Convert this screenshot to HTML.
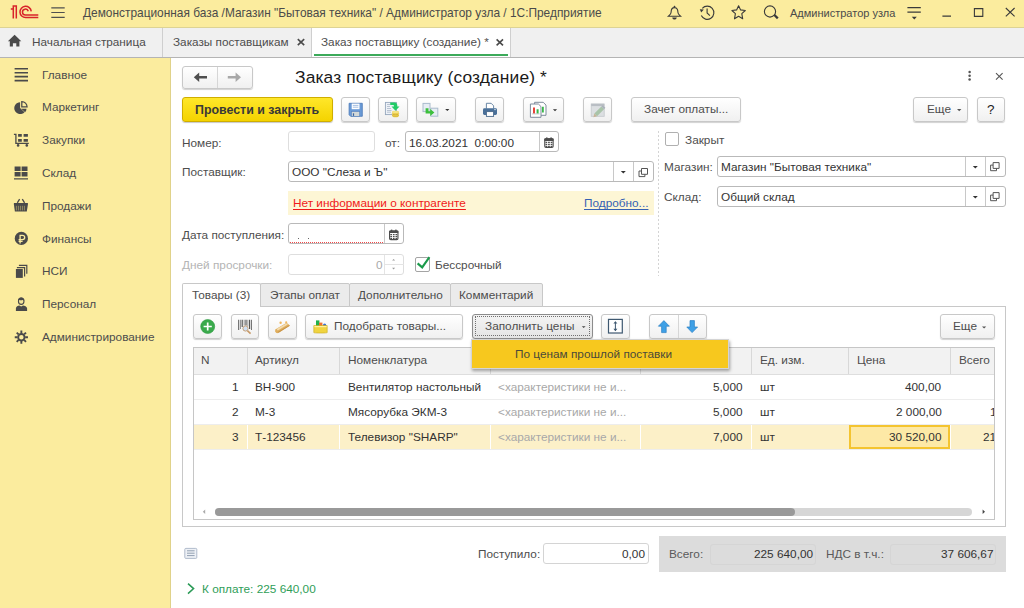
<!DOCTYPE html>
<html><head><meta charset="utf-8">
<style>
*{box-sizing:border-box;margin:0;padding:0}
html,body{width:1024px;height:608px;overflow:hidden;background:#fff}
body{font-family:"Liberation Sans",sans-serif;font-size:11.8px;color:#4d4d4d;position:relative}
.a{position:absolute}
svg.a{overflow:visible}
.t{position:absolute;white-space:nowrap;line-height:14px}
#top{left:0;top:0;width:1024px;height:28px;background:#fbec9e;border-bottom:1px solid #ddd394}
#tabs{left:0;top:28px;width:1024px;height:30px;background:#f0f0f0;border-bottom:1px solid #b4b4b4}
#side{left:0;top:58px;width:171px;height:550px;background:#fbec9e;border-right:1px solid #e0d28a}
.btn{position:absolute;height:25px;border:1px solid #c8c8c8;border-radius:3px;background:linear-gradient(#fff,#f0f0f0);box-shadow:0 1px 1px rgba(0,0,0,.18)}
.inp{position:absolute;height:21px;border:1px solid #b9b9b9;border-radius:3px;background:#fff}
.dd{position:absolute;top:0;width:0;height:100%;border-left:1px solid #c8c8c8}
</style></head><body>
<!-- top bar -->
<div id="top" class="a">
  <svg class="a" style="left:0;top:0" width="45" height="27" viewBox="0 0 45 27">
    <g fill="none" stroke="#d8232a" stroke-width="1.5">
      <path d="M10.8 9.1 H13.3 V18.4 M13.3 9.1 V6 H16.3 V18.4"/>
      <path d="M31.25 11.3 A5.65 5.65 0 1 0 25.65 17.6 H38.3"/>
      <path d="M28.25 11.3 A2.93 2.93 0 1 0 25.5 14.95 H38.3"/>
    </g>
  </svg>
  <svg class="a" style="left:0;top:0" width="70" height="27" viewBox="0 0 70 27">
    <g stroke="#4f4f4f" stroke-width="1.2"><path d="M51.3 7.9H64.7M51.3 12.5H64.7M51.3 17.3H64.7"/></g>
  </svg>
  <div class="t" style="left:83px;top:6px;font-size:11.9px;color:#4a4a4a">Демонстрационная база /Магазин "Бытовая техника" / Администратор узла / 1С:Предприятие</div>
  <svg class="a" style="left:0;top:0" width="1024" height="27" viewBox="0 0 1024 27">
    <g fill="none" stroke="#3a3a3a" stroke-width="1.1">
      <path d="M674.5 7.6 C671.6 7.6 671.1 10.2 671.1 12.3 C671.1 14.2 669.6 15.1 668.4 16.2 H680.6 C679.4 15.1 677.9 14.2 677.9 12.3 C677.9 10.2 677.4 7.6 674.5 7.6Z"/>
      <path d="M701.3 15.6 A6.6 6.6 0 1 0 702.3 8.4"/>
      <path d="M707.1 8.6 V13 L709.9 15.6"/>
      <path d="M738.6 5.7 L740.6 9.9 L745.3 10.5 L741.8 13.6 L742.7 18.8 L738.6 16.3 L734.5 18.8 L735.4 13.6 L731.9 10.5 L736.6 9.9Z" stroke-linejoin="round"/>
      <circle cx="770" cy="11.5" r="5.6"/>
      <path d="M907.4 7.6H920.8M907.4 12.1H920.8"/>
      <path d="M942.4 16.1H951M974.4 8.6H982.8V16.4H974.4Z"/>
      <path d="M1005.8 8L1014.6 16.4M1014.6 8L1005.8 16.4"/>
    </g>
    <g fill="#3a3a3a">
      <path d="M673.3 6.9 L674.5 5.4 L675.7 6.9Z"/>
      <path d="M672.2 17.6 H676.8 C676.5 19 675.6 19.6 674.5 19.6 C673.4 19.6 672.5 19 672.2 17.6Z"/>
      <path d="M699.8 9.2 L703.8 9.6 L701.2 12.4Z"/>
      <path d="M773.6 15.8 L775.2 14.2 L778.6 17.6 L777 19.2Z"/>
      <path d="M911.8 16.8H916.8L914.3 19.4Z"/>
    </g>
  </svg>
  <div class="t" style="left:790px;top:6px;font-size:11px;color:#4a4a4a">Администратор узла</div>
</div>
<!-- tabs -->
<div id="tabs" class="a">
  <svg class="a" style="left:0;top:0" width="30" height="30" viewBox="0 28 30 30">
    <path fill="#4a4a4a" d="M14.6 34.8 L21.3 41.2 H19.4 V46.6 H16.3 V43.2 H12.9 V46.6 H9.8 V41.2 H7.9Z"/>
  </svg>
  <div class="t" style="left:32px;top:7px;font-size:11.75px">Начальная страница</div>
  <div class="a" style="left:162px;top:0;width:1px;height:29px;background:#cfcfcf"></div>
  <div class="t" style="left:173px;top:7px;font-size:11.75px">Заказы поставщикам</div>
  <svg class="a" style="left:0;top:0" width="520" height="30" viewBox="0 28 520 30">
    <g stroke="#4a4a4a" stroke-width="1.6"><path d="M297.8 39.2L304.2 45.2M304.2 39.2L297.8 45.2"/></g>
  </svg>
  <div class="a" style="left:311px;top:0;width:200px;height:29px;background:#fff;border-left:1px solid #cfcfcf;border-right:1px solid #cfcfcf"></div>
  <div class="t" style="left:321px;top:7px;font-size:11.75px">Заказ поставщику (создание) *</div>
  <svg class="a" style="left:0;top:0" width="520" height="30" viewBox="0 28 520 30">
    <g stroke="#4a4a4a" stroke-width="1.6"><path d="M496.6 39.4L503 45.4M503 39.4L496.6 45.4"/></g>
  </svg>
  <div class="a" style="left:314px;top:26px;width:194px;height:2px;background:#3caa5a"></div>
</div>
<!-- sidebar -->
<div id="side" class="a">
  <div class="t" style="left:42px;top:10px">Главное</div>
  <div class="t" style="left:42px;top:42px">Маркетинг</div>
  <div class="t" style="left:42px;top:75px">Закупки</div>
  <div class="t" style="left:42px;top:108px">Склад</div>
  <div class="t" style="left:42px;top:141px">Продажи</div>
  <div class="t" style="left:42px;top:174px">Финансы</div>
  <div class="t" style="left:42px;top:206px">НСИ</div>
  <div class="t" style="left:42px;top:239px">Персонал</div>
  <div class="t" style="left:42px;top:272px">Администрирование</div>
</div>
<svg class="a" style="left:0;top:0" width="40" height="360" viewBox="0 0 40 360">
  <g fill="#4a4a4a">
    <path d="M14.6 67.9H28V69.5H14.6ZM14.6 71.9H28V73.5H14.6ZM14.6 75.8H28V77.4H14.6ZM14.6 79.8H28V81.4H14.6Z"/>
    <path d="M20.1 102.3 A5.9 5.9 0 1 0 24.5 112.2 L20.1 108.1Z"/>
    <path d="M21.2 108.7 H26.5 A5.6 5.6 0 0 1 25.1 112.2Z"/>
    <!-- cart -->
    <path d="M18.1 133.9H21.8V136.8H18.1ZM23.6 133.9H27.9V136.8H23.6ZM18.1 138.9H21.8V141.8H18.1ZM23.6 138.9H27.9V141.8H23.6Z"/>
    <circle cx="18.1" cy="145.4" r="1.3"/><circle cx="26.8" cy="145.4" r="1.3"/>
    <!-- sklad -->
    <path d="M14.6 166.6H20.6V171.1H14.6ZM21.6 166.6H27.5V171.1H21.6ZM14.6 172.1H20.6V176.5H14.6ZM21.6 172.1H27.5V176.5H21.6ZM14 178.3H28V179.6H14Z"/>
    <!-- basket -->
    <path d="M13.9 202.9H27.9V204.6L26.8 211.4H14.9L13.9 204.6Z"/>
    <!-- ruble -->
    <circle cx="21.35" cy="238.4" r="6.6"/>
    <!-- nsi -->
    <path d="M15.9 269H22.8V277.9H15.9Z"/>
    <!-- person -->
    <path d="M15.9 310.9 V308.2 C15.9 306.5 18 305.6 19.4 305.4 L21.2 306.6 L23 305.4 C24.4 305.6 27.1 306.5 27.1 308.2 V310.9Z"/>
  </g>
  <g fill="none" stroke="#4a4a4a">
    <path stroke-width="1.25" d="M21.8 106.9 V101.6 A5.4 5.4 0 0 1 27.1 106.9Z"/>
    <path stroke-width="1.3" d="M13.9 134.3H15.9V143.3H28.8"/>
    <path stroke-width="1.3" d="M17.3 202.8L19.6 199.2M24.6 202.8L22.3 199.2"/>
    <path stroke-width="1.2" d="M16.9 267.6H24.6V276.4M18.9 265.3H26.8V273.8"/>
    <circle stroke-width="1.9" cx="21.35" cy="337.2" r="3.2"/>
    <path stroke-width="1.9" d="M21.35 330.6V333.4M21.35 341V343.8M14.75 337.2H17.5M25.2 337.2H27.95M16.7 332.55L18.6 334.45M24.1 339.95L26 341.85M26 332.55L24.1 334.45M18.6 339.95L16.7 341.85"/>
  </g>
  <g fill="none" stroke="#fbec9e">
    <path stroke-width="0.8" stroke="#a89e6a" d="M16.4 205.8V210.4M18.4 205.8V210.4M20.4 205.8V210.4M22.4 205.8V210.4M24.4 205.8V210.4"/>
    <path stroke-width="1.3" d="M20.1 243.6V235.4H22.4C23.9 235.4 24.7 236.3 24.7 237.5C24.7 238.7 23.9 239.6 22.4 239.6H18.6M18.6 241.3H22.6"/>
  </g>
  <ellipse cx="21.2" cy="301.2" rx="2.75" ry="3.2" fill="#f3e49a" stroke="#4a4a4a" stroke-width="1.1"/>
  <path fill="#4a4a4a" d="M18.2 301.2 C17.9 298.8 19.4 297.6 21.2 297.6 C23 297.6 24.5 298.8 24.2 301.2 C23.6 300.2 23 299.9 22.6 300 C21.8 300.4 20.4 300.4 19.6 299.9 C19 300.1 18.6 300.6 18.2 301.2Z"/>
</svg>
<!-- form header -->
<div class="btn" style="left:182px;top:66px;width:71px;height:23px"></div>
<div class="a" style="left:217px;top:67px;width:1px;height:21px;background:#d6d6d6"></div>
<svg class="a" style="left:0;top:0" width="260" height="95" viewBox="0 0 260 95">
  <path fill="#4f4f4f" d="M193.8 77.2 L199.2 72.4 V75.9 H207 V78.5 H199.2 V82 Z"/>
  <path fill="#a8a8a8" d="M241 77.2 L235.6 72.4 V75.9 H227.8 V78.5 H235.6 V82 Z"/>
</svg>
<div class="t" style="left:295px;top:67px;font-size:17.4px;letter-spacing:0.13px;line-height:20px;color:#1a1a1a">Заказ поставщику (создание) *</div>
<svg class="a" style="left:0;top:0" width="1024" height="95" viewBox="0 0 1024 95">
  <g fill="#555"><circle cx="969.6" cy="72" r="1.25"/><circle cx="969.6" cy="75.8" r="1.25"/><circle cx="969.6" cy="79.6" r="1.25"/></g>
  <path stroke="#555" stroke-width="1.1" d="M996 73.2L1002.6 79.6M1002.6 73.2L996 79.6"/>
</svg>

<div class="a" style="left:182px;top:97px;width:151px;height:25px;border:1px solid #cfae00;border-radius:3px;background:linear-gradient(#ffe72a,#f4d300);box-shadow:0 1px 1px rgba(0,0,0,.22)"></div>
<div class="t" style="left:195px;top:102.5px;font-weight:bold;font-size:12.4px;color:#383838">Провести и закрыть</div>
<div class="btn" style="left:341px;top:97px;width:29px"></div>
<div class="btn" style="left:378px;top:97px;width:30px"></div>
<div class="btn" style="left:416px;top:97px;width:40px"></div>
<div class="btn" style="left:475px;top:97px;width:29px"></div>
<div class="btn" style="left:523px;top:97px;width:41px"></div>
<div class="btn" style="left:583px;top:97px;width:29px"></div>
<div class="btn" style="left:631px;top:97px;width:110px"></div>
<div class="t" style="left:644px;top:102px">Зачет оплаты...</div>
<div class="btn" style="left:913px;top:97px;width:55px"></div>
<div class="t" style="left:927px;top:102px">Еще</div>
<div class="btn" style="left:977px;top:97px;width:28px"></div>
<div class="t" style="left:987px;top:102.5px;color:#222;font-size:13.5px">?</div>
<svg class="a" style="left:0;top:0" width="1024" height="130" viewBox="0 0 1024 130">
  <!-- save -->
  <path fill="#6a9ad6" stroke="#4a78b8" stroke-width="0.8" d="M349.1 103.3H362.3V116.3H350.6L349.1 114.8Z"/>
  <rect x="351.7" y="103.6" width="7.8" height="5.6" fill="#fff"/>
  <path stroke="#8fb0dc" stroke-width="0.8" d="M352.8 105.4H358.4M352.8 107.2H358.4"/>
  <rect x="351.5" y="111.6" width="8.2" height="4.7" fill="#d2d8d8" stroke="#5a84be" stroke-width="0.6"/>
  <rect x="352.9" y="113.3" width="1.2" height="2.6" fill="#3a64a0"/>
  <!-- post -->
  <rect x="385.4" y="102.4" width="11" height="12.2" fill="#eef2f8" stroke="#95a6bd" stroke-width="0.9"/>
  <path stroke="#a9b6c8" stroke-width="0.8" d="M387 104.5H390M387 106.5H390M387 108.5H391M387 110.5H391.5M387 112.2H391"/>
  <path fill="#ecd050" d="M392.2 112A3.3 1.3 0 0 1 398.8 112V116A3.3 1.3 0 0 1 392.2 116Z"/>
  <path fill="none" stroke="#caa428" stroke-width="0.6" d="M392.2 113.6A3.3 1.1 0 0 0 398.8 113.6M392.2 115.2A3.3 1.1 0 0 0 398.8 115.2"/>
  <ellipse cx="395.5" cy="112" rx="3.3" ry="1.1" fill="#f6e486"/>
  <path fill="#22cc66" d="M390.2 102.4 H394.5 C396.5 102.4 397.3 103.8 397.3 105.4 V106.6 H399.5 L395.5 110.8 L391.5 106.6 H393.9 V105.6 C393.9 105.1 393.6 104.9 393.1 104.9 H390.2Z"/>
  <!-- create based -->
  <rect x="423" y="103.4" width="7" height="8.2" fill="#e6edf4" stroke="#a9bbcc" stroke-width="1"/>
  <rect x="430.8" y="108.2" width="7" height="8" fill="#e6edf4" stroke="#a9bbcc" stroke-width="1"/>
  <path fill="#3cc03c" d="M425.6 108.3H428.5V111.2H430.2V108.9L434.4 112.4L430.2 115.9V113.6H425.6Z"/>
  <path fill="#333" d="M445.2 108.9H449.4L447.3 111Z"/>
  <!-- print -->
  <path fill="#fff" stroke="#5a7a9c" stroke-width="0.9" d="M486.4 108.6V103.3H491.2L493.6 105.8V108.6"/>
  <rect x="483" y="108.3" width="14" height="6.6" rx="1.4" fill="#4a7099"/>
  <rect x="494.2" y="109.2" width="1.6" height="0.9" fill="#dde8f2"/>
  <rect x="486.4" y="111.6" width="7.2" height="4.8" fill="#fff" stroke="#4a6a8c" stroke-width="0.9"/>
  <!-- reports -->
  <path fill="#fff" stroke="#7f8b9c" stroke-width="1" d="M534.6 102.3H543.2L546 105.1V115.3H534.6Z"/>
  <path fill="#fff" stroke="#7f8b9c" stroke-width="1" d="M530.4 104H538.4L541 106.6V117.3H530.4Z"/>
  <path fill="#e8433a" d="M533 107.6H535V113.6H533Z"/>
  <path fill="#38b848" d="M536.6 109.2H538.6V113.6H536.6ZM542 106.8H543.8V112.4H542Z"/>
  <path stroke="#9aa" stroke-width="0.6" d="M532 113.9H539.6"/>
  <path fill="#333" d="M552.9 109.2H557.1L555 111.2Z"/>
  <!-- edit disabled -->
  <rect x="591.2" y="103.9" width="13" height="12.4" fill="#dcdfe2" stroke="#c4c8cc" stroke-width="0.8"/>
  <rect x="591.2" y="103.9" width="13" height="2.2" fill="#b9bec4"/>
  <path fill="#a9c4a9" d="M594.4 113.6L601.4 106.6L604 109.2L597 116.2Z"/>
  <path fill="#c7b496" d="M594.4 113.6L597 116.2L593.4 117.2Z"/>
  <path fill="#aab2ba" d="M601.4 106.6L602.8 105.2L605.4 107.8L604 109.2Z"/>
  <!-- eshe -->
  <path fill="#555" d="M957 109.1H961.4L959.2 111.2Z"/>
</svg>
<!-- fields -->
<div class="t" style="left:182px;top:136px">Номер:</div>
<div class="inp" style="left:288px;top:131px;width:87px;border-color:#dedede"></div>
<div class="t" style="left:385px;top:136px">от:</div>
<div class="inp" style="left:405px;top:131px;width:154px"><div class="dd" style="left:133px"></div></div>
<div class="t" style="left:409px;top:136px;color:#333">16.03.2021&nbsp; 0:00:00</div>

<div class="t" style="left:182px;top:165px">Поставщик:</div>
<div class="inp" style="left:288px;top:161px;width:366px"><div class="dd" style="left:324px"></div><div class="dd" style="left:344px"></div></div>
<div class="t" style="left:292px;top:165px;color:#333">ООО "Слеза и Ъ"</div>

<div class="a" style="left:288px;top:191px;width:366px;height:24px;background:#fdf6d5"></div>
<div class="t" style="left:293px;top:196px;color:#f01a1a;text-decoration:underline;text-decoration-skip-ink:none;text-underline-offset:1.5px">Нет информации о контрагенте</div>
<div class="t" style="left:584px;top:196px;color:#3561b3;text-decoration:underline;text-decoration-skip-ink:none;text-underline-offset:1.5px">Подробно...</div>

<div class="t" style="left:182px;top:228px">Дата поступления:</div>
<div class="inp" style="left:288px;top:223px;width:116px;height:21px"><div class="dd" style="left:95px"></div></div>
<div class="a" style="left:290px;top:242px;width:93px;height:0;border-top:1px dotted #f04848"></div>
<div class="a" style="left:298px;top:238px;width:1px;height:1px;background:#666"></div>
<div class="a" style="left:308px;top:238px;width:1px;height:1px;background:#666"></div>
<div class="t" style="left:182px;top:258px;color:#b4b4b4">Дней просрочки:</div>
<div class="inp" style="left:288px;top:254px;width:116px;border-color:#dedede"><div class="dd" style="left:95px;border-color:#e4e4e4"></div><div class="a" style="left:96px;top:9px;width:19px;height:1px;background:#e4e4e4"></div></div>
<div class="t" style="left:376px;top:258px;color:#aaa">0</div>
<div class="a" style="left:415px;top:257px;width:15px;height:15px;border:1px solid #a4a4a4;border-radius:2px;background:#fff"></div>
<div class="t" style="left:435px;top:258px">Бессрочный</div>



<div class="a" style="left:658px;top:131px;width:1px;height:145px;background:repeating-linear-gradient(#d4d4d4 0 2px,transparent 2px 4px)"></div>
<div class="a" style="left:665px;top:132px;width:14px;height:14px;border:1px solid #b0b0b0;border-radius:2px;background:#fff"></div>
<div class="t" style="left:685px;top:133px">Закрыт</div>
<div class="t" style="left:664px;top:160px">Магазин:</div>
<div class="inp" style="left:717px;top:156px;width:289px"><div class="dd" style="left:247px"></div><div class="dd" style="left:267px"></div></div>
<div class="t" style="left:721px;top:160px;color:#333">Магазин "Бытовая техника"</div>
<div class="t" style="left:664px;top:190px">Склад:</div>
<div class="inp" style="left:717px;top:186px;width:289px"><div class="dd" style="left:247px"></div><div class="dd" style="left:267px"></div></div>
<div class="t" style="left:721px;top:190px;color:#333">Общий склад</div>
<svg class="a" style="left:0;top:0" width="1024" height="290" viewBox="0 0 1024 290">
  <!-- calendar icons -->
  <rect x="544.75" y="138.8" width="8.4" height="8.6" rx="1.2" fill="#fff" stroke="#4d4d4d" stroke-width="1.1"/>
  <rect x="544.2" y="138.3" width="9.5" height="2.6" rx="1" fill="#4d4d4d"/>
  <rect x="546.1" y="137.4" width="1.4" height="2" fill="#4d4d4d"/><rect x="550.4000000000001" y="137.4" width="1.4" height="2" fill="#4d4d4d"/>
  <path fill="#4d4d4d" d="M545.5 141.7h1.7v1.3h-1.7zM545.5 143.8h1.7v1.3h-1.7zM545.5 145.8h1.7v1.3h-1.7zM548.1 141.7h1.7v1.3h-1.7zM548.1 143.8h1.7v1.3h-1.7zM548.1 145.8h1.7v1.3h-1.7zM550.7 141.7h1.7v1.3h-1.7zM550.7 143.8h1.7v1.3h-1.7zM550.7 145.8h1.7v1.3h-1.7z"/>
  <rect x="389.55" y="231.0" width="8.4" height="8.6" rx="1.2" fill="#fff" stroke="#4d4d4d" stroke-width="1.1"/>
  <rect x="389" y="230.5" width="9.5" height="2.6" rx="1" fill="#4d4d4d"/>
  <rect x="390.9" y="229.6" width="1.4" height="2" fill="#4d4d4d"/><rect x="395.2" y="229.6" width="1.4" height="2" fill="#4d4d4d"/>
  <path fill="#4d4d4d" d="M390.3 233.9h1.7v1.3h-1.7zM390.3 236.0h1.7v1.3h-1.7zM390.3 238.0h1.7v1.3h-1.7zM392.9 233.9h1.7v1.3h-1.7zM392.9 236.0h1.7v1.3h-1.7zM392.9 238.0h1.7v1.3h-1.7zM395.5 233.9h1.7v1.3h-1.7zM395.5 236.0h1.7v1.3h-1.7zM395.5 238.0h1.7v1.3h-1.7z"/>
  <!-- dropdown triangles -->
  <g fill="#333">
    <path d="M620.8 171H625.8L623.3 173.6Z"/>
    <path d="M972.8 166H977.8L975.3 168.6Z"/>
    <path d="M972.8 196H977.8L975.3 198.6Z"/>
  </g>
  <!-- open icons -->
  <g fill="none" stroke="#555" stroke-width="1">
    <path d="M641.5 168.5H647.5V174.3H641.5Z M641.5 171H639V176.6H644.9V174.3"/>
    <path d="M993.1 162.6H999.1V168.4H993.1Z M993.1 165.1H990.6V170.7H996.5V168.4"/>
    <path d="M993.1 192.6H999.1V198.4H993.1Z M993.1 195.1H990.6V200.7H996.5V198.4"/>
  </g>
  <!-- spin arrows -->
  <g fill="#999">
    <path d="M392.1 260.6H395.1L393.6 258.9Z"/>
    <path d="M392.1 267.8H395.1L393.6 269.5Z"/>
  </g>
  <path fill="none" stroke="#1a9a4a" stroke-width="2.1" d="M417.6 263.4L422.2 267.4L429.4 257.2"/>
</svg>
<!-- tabs panel -->
<div class="a" style="left:182px;top:306px;width:824px;height:221px;border:1px solid #c8c8c8"></div>
<div class="a" style="left:260px;top:283px;width:90px;height:24px;background:#ebebeb;border:1px solid #c8c8c8;border-radius:2px 2px 0 0"></div>
<div class="t" style="left:270px;top:288px">Этапы оплат</div>
<div class="a" style="left:349px;top:283px;width:102px;height:24px;background:#ebebeb;border:1px solid #c8c8c8;border-radius:2px 2px 0 0"></div>
<div class="t" style="left:358px;top:288px">Дополнительно</div>
<div class="a" style="left:450px;top:283px;width:93px;height:24px;background:#ebebeb;border:1px solid #c8c8c8;border-radius:2px 2px 0 0"></div>
<div class="t" style="left:459px;top:288px">Комментарий</div>
<div class="a" style="left:182px;top:283px;width:79px;height:24px;background:#fff;border:1px solid #c8c8c8;border-bottom:none;border-radius:2px 2px 0 0"></div>
<div class="t" style="left:192px;top:288px">Товары (3)</div>

<div class="btn" style="left:193px;top:314px;width:29px"></div>
<div class="btn" style="left:231px;top:314px;width:28px"></div>
<div class="btn" style="left:268px;top:314px;width:29px"></div>
<div class="btn" style="left:305px;top:314px;width:158px"></div>
<div class="t" style="left:334px;top:319px">Подобрать товары...</div>
<div class="btn" style="left:472px;top:314px;width:121px;border-color:#8c8c8c;background:linear-gradient(#f4f4f4,#e4e4e4)"></div>
<div class="a" style="left:475px;top:316px;width:115px;height:20px;border:1px dotted #707070"></div>
<div class="t" style="left:485px;top:319px">Заполнить цены</div>
<div class="btn" style="left:601px;top:314px;width:29px"></div>
<div class="btn" style="left:649px;top:314px;width:58px"></div>
<div class="a" style="left:678px;top:315px;width:1px;height:23px;background:#d6d6d6"></div>
<div class="btn" style="left:940px;top:314px;width:55px"></div>
<div class="t" style="left:953px;top:319px">Еще</div>
<svg class="a" style="left:0;top:0" width="1024" height="345" viewBox="0 0 1024 345">
  <!-- add -->
  <circle cx="207.7" cy="326.5" r="7" fill="#3aaa4c" stroke="#2e9a40" stroke-width="0.6"/>
  <path stroke="#fff" stroke-width="1.7" d="M203.6 326.5H211.8M207.7 322.4V330.6"/>
  <!-- barcode -->
  <g fill="#555"><path d="M238.2 319.8H239.2V330H238.2ZM240.2 319.8H240.8V329H240.2ZM241.6 319.8H242.8V327H241.6ZM243.8 319.8H244.4V325.6H243.8ZM245.4 319.8H246.6V325.6H245.4ZM247.6 319.8H248.2V326.6H247.6ZM249 319.8H250.2V329H249ZM251.2 319.8H252V330H251.2Z"/></g>
  <path stroke="#c89a68" stroke-width="1.6" d="M247.4 330.6L250.6 333.6"/>
  <circle cx="245.5" cy="328.5" r="2.6" fill="#cfe0f4" stroke="#c49a6c" stroke-width="0.9"/>
  <!-- brush -->
  <circle cx="280.6" cy="322.8" r="1.2" fill="#f0b860"/><circle cx="286.2" cy="322.3" r="1.1" fill="#f0b860"/>
  <path fill="#dfae5e" d="M275.2 329.4L286.6 322.8L289.9 325.6L278.6 332.8Q276 334 275.2 331.2Z"/>
  <path fill="#f4dcae" d="M276.6 328.9L286.5 323.3L287.8 324.5L277.8 330.4Z"/>
  <path fill="#c99448" d="M277.6 332L289 325.2L289.9 325.8L278.6 332.8Z"/>
  <!-- select basket -->
  <rect x="316" y="320.4" width="3.4" height="6" fill="#22b04a"/>
  <rect x="319" y="322.6" width="3.4" height="4" fill="#f07030"/>
  <circle cx="324.6" cy="325.2" r="1.6" fill="#3a70d0"/>
  <path fill="#f0d440" stroke="#c8a818" stroke-width="0.6" d="M313.8 325.6H327.2V332.6C327.2 333.2 313.8 333.2 313.8 332.6Z"/>
  <path fill="#fff0a0" d="M314.4 326H326.6V327.2H314.4Z"/>
  <!-- fill prices dropdown -->
  <path fill="#444" d="M581.8 326.2H585.6L583.7 328.1Z"/>
  <!-- row height -->
  <rect x="608.5" y="319.4" width="13.8" height="13.6" fill="#fff" stroke="#3e5870" stroke-width="1.2"/>
  <path stroke="#3e5870" stroke-width="1" d="M615.4 321.8V330.6"/>
  <path fill="#3e5870" d="M613.4 323.6L615.4 321.2L617.4 323.6ZM613.4 328.8L615.4 331.2L617.4 328.8Z"/>
  <!-- up/down -->
  <path fill="#3ea0e6" stroke="#2a80c4" stroke-width="0.7" d="M663.9 320.6L669.4 326.2H666.2V332.6H661.6V326.2H658.4Z"/>
  <path fill="#3ea0e6" stroke="#2a80c4" stroke-width="0.7" d="M692.1 332.6L686.8 327H690V320.6H694.4V327H697.6Z"/>
  <!-- eshe -->
  <path fill="#555" d="M982 326.4H986.2L984.1 328.4Z"/>
</svg>

<!-- table -->
<div class="a" style="left:193px;top:347px;width:802px;height:173px;border:1px solid #c6c6c6;background:#fff"></div>
<div class="a" style="left:194px;top:348px;width:800px;height:27px;background:#f2f2f2;border-bottom:1px solid #dedede"></div>
<div class="a" style="left:247px;top:348px;width:1px;height:26px;background:#d8d8d8"></div>
<div class="a" style="left:339px;top:348px;width:1px;height:26px;background:#d8d8d8"></div>
<div class="a" style="left:490px;top:348px;width:1px;height:26px;background:#d8d8d8"></div>
<div class="a" style="left:640px;top:348px;width:1px;height:26px;background:#d8d8d8"></div>
<div class="a" style="left:751px;top:348px;width:1px;height:26px;background:#d8d8d8"></div>
<div class="a" style="left:848px;top:348px;width:1px;height:26px;background:#d8d8d8"></div>
<div class="a" style="left:950px;top:348px;width:1px;height:26px;background:#d8d8d8"></div>
<div class="t" style="left:201px;top:353px">N</div>
<div class="t" style="left:255px;top:353px">Артикул</div>
<div class="t" style="left:348px;top:353px">Номенклатура</div>
<div class="t" style="left:760px;top:353px">Ед. изм.</div>
<div class="t" style="left:857px;top:353px">Цена</div>
<div class="t" style="left:959px;top:353px">Всего</div>

<div class="a" style="left:194px;top:399px;width:800px;height:1px;background:#ededed"></div>
<div class="a" style="left:194px;top:424px;width:800px;height:1px;background:#ededed"></div>
<div class="a" style="left:194px;top:425px;width:800px;height:24px;background:#fcf0c8"></div>
<div class="a" style="left:194px;top:449px;width:800px;height:1px;background:#ededed"></div>
<div class="a" style="left:247px;top:425px;width:1px;height:24px;background:#fff"></div>
<div class="a" style="left:339px;top:425px;width:1px;height:24px;background:#fff"></div>
<div class="a" style="left:490px;top:425px;width:1px;height:24px;background:#fff"></div>
<div class="a" style="left:640px;top:425px;width:1px;height:24px;background:#fff"></div>
<div class="a" style="left:751px;top:425px;width:1px;height:24px;background:#fff"></div>
<div class="a" style="left:950px;top:425px;width:1px;height:24px;background:#fff"></div>

<div class="t" style="left:232px;top:380px;color:#333">1</div>
<div class="t" style="left:255px;top:380px;color:#333">ВН-900</div>
<div class="t" style="left:348px;top:380px;color:#333">Вентилятор настольный</div>
<div class="t" style="left:498px;top:380px;color:#a8a8a8">&lt;характеристики не и...</div>
<div class="t" style="left:713px;top:380px;color:#333">5,000</div>
<div class="t" style="left:760px;top:380px;color:#333">шт</div>
<div class="t" style="left:905px;top:380px;color:#333">400,00</div>

<div class="t" style="left:232px;top:405px;color:#333">2</div>
<div class="t" style="left:255px;top:405px;color:#333">М-3</div>
<div class="t" style="left:348px;top:405px;color:#333">Мясорубка ЭКМ-3</div>
<div class="t" style="left:498px;top:405px;color:#a8a8a8">&lt;характеристики не и...</div>
<div class="t" style="left:713px;top:405px;color:#333">5,000</div>
<div class="t" style="left:760px;top:405px;color:#333">шт</div>
<div class="t" style="left:896px;top:405px;color:#333">2 000,00</div>
<div class="t" style="left:990px;top:405px;color:#333">1</div>

<div class="t" style="left:232px;top:430px;color:#333">3</div>
<div class="t" style="left:255px;top:430px;color:#333">Т-123456</div>
<div class="t" style="left:348px;top:430px;color:#333">Телевизор "SHARP"</div>
<div class="t" style="left:498px;top:430px;color:#a8a8a8">&lt;характеристики не и...</div>
<div class="t" style="left:713px;top:430px;color:#333">7,000</div>
<div class="t" style="left:760px;top:430px;color:#333">шт</div>
<div class="a" style="left:849px;top:425px;width:101px;height:24px;border:2px solid #f4c430;background:#fde9a6"></div>
<div class="t" style="left:889px;top:430px;color:#333">30 520,00</div>
<div class="t" style="left:983px;top:430px;color:#333">21</div>
<div class="a" style="left:994px;top:374px;width:11px;height:145px;background:#fff;border-left:1px solid #c6c6c6"></div>

<!-- dropdown menu -->
<div class="a" style="left:471px;top:339px;width:258px;height:30px;background:#f7c81e;border:1px solid #d4d4d4;box-shadow:1px 2px 3px rgba(0,0,0,.35)"></div>
<div class="t" style="left:515px;top:347px;color:#4a4a3a">По ценам прошлой поставки</div>

<!-- scrollbar -->
<div class="a" style="left:215px;top:508px;width:757px;height:8px;border-radius:4px;background:#d6d6d6"></div>
<div class="a" style="left:215px;top:508px;width:580px;height:8px;border-radius:4px;background:#999"></div>
<svg class="a" style="left:0;top:0" width="1024" height="530" viewBox="0 0 1024 530">
  <path fill="#aaa" d="M205.2 509.6V514L202.8 511.8Z"/>
  <path fill="#444" d="M982.6 509.6V514L985 511.8Z"/>
</svg>
<!-- footer -->
<svg class="a" style="left:0;top:0" width="1024" height="608" viewBox="0 0 1024 608">
  <rect x="184.8" y="548.4" width="12" height="10" rx="1" fill="#eef1f6" stroke="#a8b4c6" stroke-width="0.9"/>
  <path stroke="#7a8aa0" stroke-width="0.8" d="M187 550.8H194.6M187 553.2H194.6M187 555.6H194.6"/>
  <path fill="none" stroke="#2a9a56" stroke-width="1.5" d="M188 583.6L193.6 588.6L188 593.6"/>
</svg>
<div class="t" style="left:478px;top:547px">Поступило:</div>
<div class="inp" style="left:543px;top:543px;width:106px;border-color:#d4d4d4"></div>
<div class="t" style="left:622px;top:547px;color:#333">0,00</div>
<div class="a" style="left:659px;top:536px;width:347px;height:36px;background:#dcdcdc"></div>
<div class="a" style="left:710px;top:544px;width:106px;height:21px;border:1px solid #d5d5d5;border-radius:3px"></div>
<div class="a" style="left:890px;top:544px;width:106px;height:21px;border:1px solid #d5d5d5;border-radius:3px"></div>
<div class="t" style="left:669px;top:547px;color:#5a5a5a">Всего:</div>
<div class="t" style="left:754px;top:547px;color:#333">225 640,00</div>
<div class="t" style="left:826px;top:547px;color:#5a5a5a">НДС в т.ч.:</div>
<div class="t" style="left:941px;top:547px;color:#333">37 606,67</div>
<div class="t" style="left:202px;top:582px;color:#2f9e58">К оплате: 225 640,00</div>
</body></html>
